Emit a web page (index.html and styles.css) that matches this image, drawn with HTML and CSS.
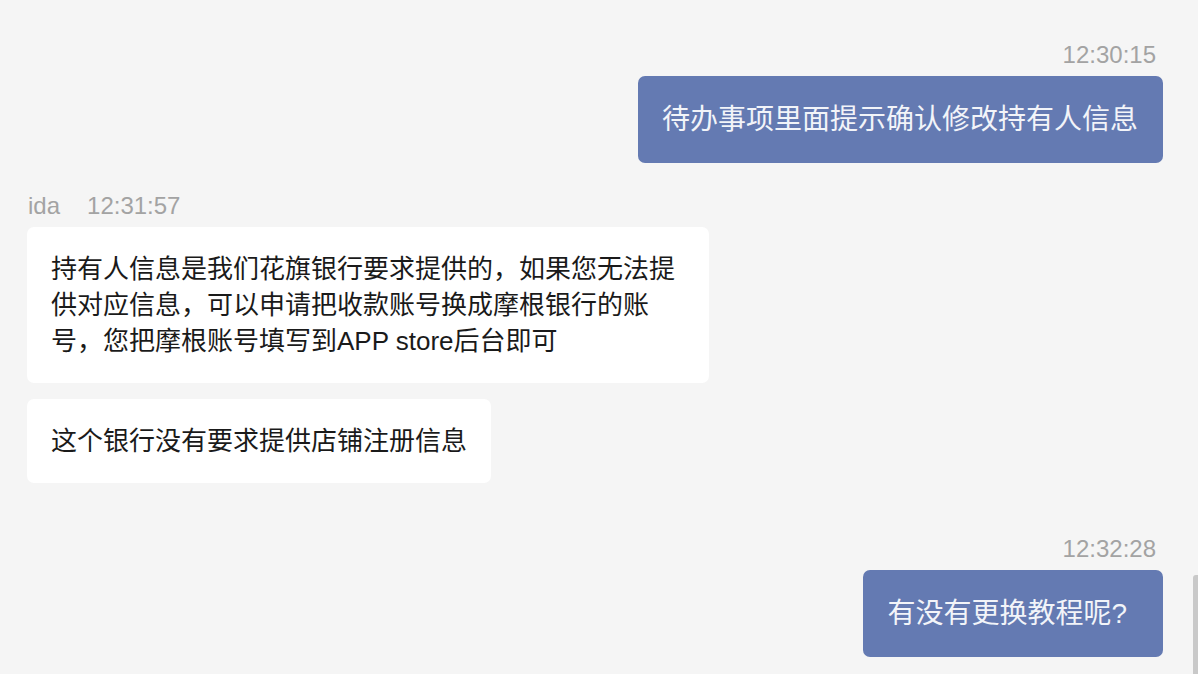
FILE: index.html
```html
<!DOCTYPE html>
<html lang="zh-CN">
<head>
    <meta charset="UTF-8">
    <meta name="viewport" content="width=device-width, initial-scale=1.0">
    <title>Chat</title>
    <link rel="stylesheet" href="styles.css">
</head>
<body>
    <div class="chat">
        <div class="group mine">
            <div class="meta"><span class="time">12:30:15</span></div>
            <div class="bubble">待办事项里面提示确认修改持有人信息</div>
        </div>

        <div class="group theirs">
            <div class="meta"><span class="name">ida</span><span class="time">12:31:57</span></div>
            <div class="bubble">持有人信息是我们花旗银行要求提供的，如果您无法提供对应信息，可以申请把收款账号换成摩根银行的账号，您把摩根账号填写到APP store后台即可</div>
            <div class="bubble">这个银行没有要求提供店铺注册信息</div>
        </div>

        <div class="group mine later">
            <div class="meta"><span class="time">12:32:28</span></div>
            <div class="bubble question">有没有更换教程呢?</div>
        </div>

        <div class="scroll-thumb"></div>
    </div>
</body>
</html>
```

FILE: styles.css
```css
* {
    margin: 0;
    padding: 0;
    box-sizing: border-box;
}

body {
    font-family: "Liberation Sans", "Noto Sans CJK SC", sans-serif;
    background: #f5f5f5;
    color: #1a1a1a;
    height: 100vh;
    overflow: hidden;
}

.chat {
    position: relative;
    height: 100%;
    padding: 41px 35px 0 27px;
    display: flex;
    flex-direction: column;
}

.group {
    display: flex;
    flex-direction: column;
    gap: 16px;
}

.group + .group {
    margin-top: 29px;
}

.group.later {
    margin-top: 52px;
}

.mine {
    align-items: flex-end;
}

.theirs {
    align-items: flex-start;
}

.meta {
    font-size: 24px;
    line-height: 28px;
    color: #a3a3a3;
    display: flex;
    gap: 27px;
    margin-bottom: -9px;
}

.mine .meta {
    padding-right: 7px;
}

.theirs .meta {
    padding-left: 1px;
}

.bubble {
    border-radius: 7px;
    padding: 24px 24px;
}

.mine .bubble {
    background: #647ab2;
    color: #f2f4f9;
    font-size: 28px;
    line-height: 39px;
    padding-right: 25px;
}

.mine .bubble.question {
    padding-right: 36px;
}

.theirs .bubble {
    background: #ffffff;
    font-size: 26px;
    line-height: 36px;
    max-width: 682px;
}

.scroll-thumb {
    position: absolute;
    right: 0;
    top: 575px;
    width: 5px;
    height: 120px;
    background: #c9c9c9;
    border-radius: 3px 0 0 0;
}
```
